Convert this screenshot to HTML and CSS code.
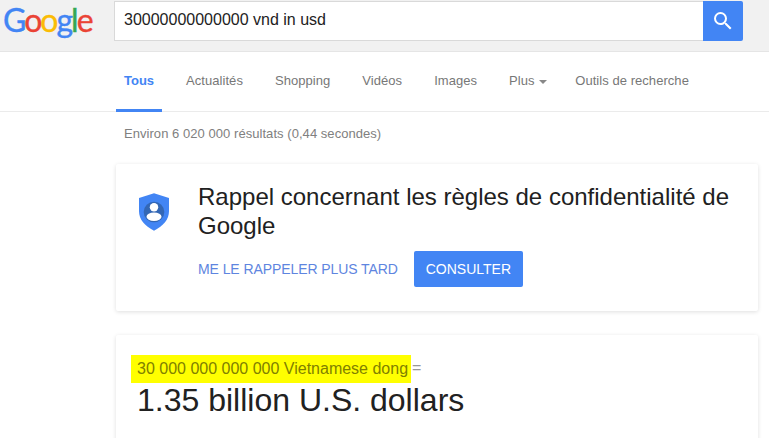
FILE: index.html
```html
<!DOCTYPE html>
<html>
<head>
    <title>30000000000000 vnd in usd</title>
    <link rel="stylesheet" href="styles.css">
</head>
<body>
    <!-- Search header -->
    <div class="header">
        <div class="logo"><span class="blue">G</span><span class="red">o</span><span class="yellow">o</span><span class="blue">g</span><span class="green">l</span><span class="red">e</span></div>
        <div class="search-box">30000000000000 vnd in usd</div>
        <button class="search-btn">
            <svg width="24" height="24" viewBox="0 0 24 24"><path fill="#fff" d="M15.5 14h-.79l-.28-.27A6.47 6.47 0 0 0 16 9.5 6.5 6.5 0 1 0 9.5 16c1.61 0 3.09-.59 4.23-1.57l.27.28v.79l5 4.99L20.49 19l-4.99-5zm-6 0C7.01 14 5 11.99 5 9.5S7.01 5 9.5 5 14 7.01 14 9.5 11.99 14 9.5 14z"/></svg>
        </button>
    </div>

    <!-- Tabs -->
    <div class="tabs">
        <a class="tab active">Tous</a>
        <a class="tab">Actualités</a>
        <a class="tab">Shopping</a>
        <a class="tab">Vidéos</a>
        <a class="tab">Images</a>
        <a class="tab tab-more">Plus <span class="arrow"></span></a>
        <a class="tab">Outils de recherche</a>
    </div>

    <div class="content">
        <div class="result-count">Environ 6 020 000 résultats (0,44 secondes)</div>

        <!-- Privacy reminder -->
        <div class="card reminder">
            <svg class="shield" width="30" height="38" viewBox="0 0 32 40">
                <path fill="#4285f4" d="M16 0 32 5V19C32 28 26 35 16 40 6 35 0 28 0 19V5Z"/>
                <circle cx="16" cy="20" r="11" fill="#3367b5"/>
                <circle cx="16" cy="15" r="4.500" fill="#fff"/>
                <ellipse cx="16" cy="25" rx="8" ry="4.500" fill="#fff"/>
            </svg>
            <div class="reminder-body">
                <h2>Rappel concernant les règles de confidentialité de Google</h2>
                <div class="reminder-actions">
                    <a class="later">ME LE RAPPELER PLUS TARD</a>
                    <button class="review">CONSULTER</button>
                </div>
            </div>
        </div>

        <!-- Currency answer -->
        <div class="card answer">
            <div class="answer-from"><span class="highlight">30 000 000 000 000 Vietnamese dong</span><span class="equals">=</span></div>
            <div class="answer-to">1.35 billion U.S. dollars</div>
        </div>
    </div>
</body>
</html>
```

FILE: styles.css
```css
html, body {
    height: 438px;
    overflow: hidden;
}

body {
    margin: 0;
    background-color: #fff;
    font-family: "Liberation Sans", Arial, sans-serif;
    color: #212121;
}

.header {
    display: flex;
    align-items: flex-start;
    height: 51px;
    background-color: #f1f1f1;
    border-bottom: 1px solid #e5e5e5;
}

.logo {
    width: 114px;
    padding-left: 3px;
    box-sizing: border-box;
    font-family: "Lato", sans-serif;
    font-size: 32px;
    line-height: 40px;
    letter-spacing: -2px;
    -webkit-text-stroke: 0.4px;
}

.blue { color: #4285f4; }
.red { color: #ea4335; }
.yellow { color: #fbbc05; }
.green { color: #34a853; }

.search-box {
    width: 589px;
    height: 40px;
    margin-top: 1px;
    padding-left: 9px;
    box-sizing: border-box;
    background-color: #fff;
    border: 1px solid #d9d9d9;
    border-right: none;
    font-size: 16px;
    line-height: 36px;
    color: #222;
}

.search-btn {
    width: 40px;
    height: 40px;
    margin-top: 1px;
    padding: 0;
    border: none;
    border-radius: 0 2px 2px 0;
    background-color: #4285f4;
    display: flex;
    justify-content: center;
    align-items: center;
}

.tabs {
    display: flex;
    height: 59px;
    padding-left: 116px;
    gap: 16px;
    border-bottom: 1px solid #ebebeb;
}

.tab {
    padding: 0 8px;
    font-size: 13px;
    letter-spacing: 0.05px;
    line-height: 57px;
    color: #777;
    box-sizing: border-box;
    height: 60px;
}

.tab.active {
    color: #4285f4;
    font-weight: bold;
    letter-spacing: 0;
    border-bottom: 3px solid #4285f4;
}

.tab-more {
    margin-right: -4px;
}

.arrow {
    display: inline-block;
    margin-left: 1px;
    vertical-align: middle;
    border-top: 4px solid #888;
    border-left: 4px solid transparent;
    border-right: 4px solid transparent;
}

.content {
    padding-left: 116px;
    width: 642px;
}

.result-count {
    padding-left: 8px;
    margin-top: 14px;
    font-size: 13px;
    letter-spacing: 0.05px;
    line-height: 15px;
    color: #808080;
}

.card {
    background-color: #fff;
    box-shadow: 0 1px 4px rgba(0, 0, 0, 0.13);
    border-radius: 2px;
}

.reminder {
    display: flex;
    margin-top: 23px;
    height: 147px;
    box-sizing: border-box;
    padding: 19px 22px 0 23px;
}

.shield {
    margin: 10px 29px 0 0;
    flex-shrink: 0;
}

h2 {
    margin: 0;
    font-size: 24px;
    font-weight: normal;
    line-height: 28.5px;
    color: #212121;
}

.reminder-actions {
    display: flex;
    align-items: center;
    gap: 16px;
    margin-top: 11px;
}

.later {
    font-size: 14px;
    letter-spacing: -0.08px;
    color: #5e85e0;
}

.review {
    width: 109px;
    height: 36px;
    padding: 0;
    border: none;
    border-radius: 2px;
    background-color: #4285f4;
    color: #fff;
    font-family: inherit;
    font-size: 14px;
}

.answer {
    margin-top: 24px;
    height: 120px;
    box-sizing: border-box;
    padding: 19px 21px;
}

.answer-from {
    display: flex;
    margin-left: -6px;
    font-size: 16px;
    line-height: 26px;
    padding-top: 1px;
}

.highlight {
    padding: 0 3px 0 6px;
    background-color: #ff0;
    height: 28px;
    line-height: 28px;
    color: #808000;
}

.equals {
    margin-left: 1px;
    color: #999;
}

.answer-to {
    margin-top: -1px;
    font-size: 32px;
    line-height: 36px;
    color: #212121;
}
```
